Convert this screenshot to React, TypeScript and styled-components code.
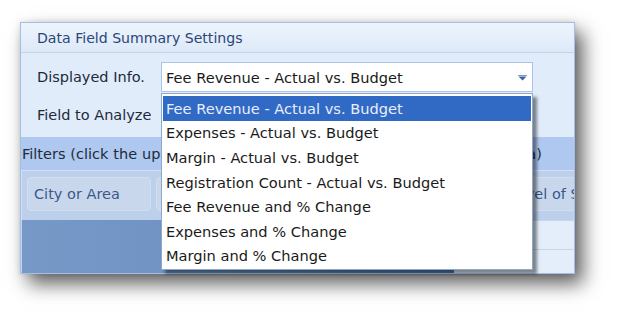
import React from "react";
import styled, { createGlobalStyle } from "styled-components";

const Global = createGlobalStyle`
  html, body { margin: 0; padding: 0; background: #ffffff; }
  body { width: 630px; height: 328px; overflow: hidden; font-family: "DejaVu Sans", Verdana, sans-serif; }
  *, *::before, *::after { box-sizing: border-box; }
`;

const Stage = styled.div`
  padding: 22px 0 0 20px;
`;

const Window = styled.div`
  position: relative;
  width: 555px;
  height: 252px;
  border: 1px solid #a3bfe8;
  box-shadow: 8px 10px 18px rgba(0, 0, 0, 0.62), 0 0 6px rgba(0, 0, 0, 0.12);
  background: #e1ecfb;
`;

const Clip = styled.div`
  display: flex;
  flex-direction: column;
  height: 100%;
  overflow: hidden;
  box-shadow: inset -3px 0 0 #bcd2f3;
`;

const Header = styled.div`
  height: 30px;
  flex: none;
  display: flex;
  align-items: center;
  padding-left: 16px;
  background: linear-gradient(#edf4fd, #dee9f8);
  border-bottom: 1px solid #c3d4ee;
  color: #2a4677;
  font-size: 14.1px;
`;

const Settings = styled.div`
  height: 84px;
  flex: none;
  display: grid;
  grid-template-columns: 124px 372px;
  grid-template-rows: 30px 30px;
  row-gap: 8px;
  align-content: start;
  padding: 9px 0 0 16px;
  background: #e1ecfb;
`;

const Label = styled.div`
  display: flex;
  align-items: center;
  font-size: 14.5px;
  color: #1d2a3a;
`;

const ComboWrap = styled.div`
  position: relative;
`;

const Combo = styled.div`
  height: 30px;
  border: 1px solid #abc5ea;
  background: #ffffff;
  display: flex;
  align-items: center;
  justify-content: space-between;
  padding: 0 5px 0 4px;
  font-size: 14.6px;
  color: #1a1a1a;
`;

const Arrow = styled.svg`
  width: 9px;
  height: 6px;
  margin-top: 1px;
`;

const List = styled.div`
  position: absolute;
  left: 0;
  top: 31px;
  width: 372px;
  height: 177px;
  background: #ffffff;
  border: 1px solid #8ea8cc;
  padding: 2px 1px;
  box-shadow: 4px 4px 3px rgba(0, 0, 0, 0.45);
  z-index: 5;
`;

const Item = styled.div<{ $active?: boolean }>`
  height: 24.6px;
  display: flex;
  align-items: center;
  padding-left: 3px;
  font-size: 14.6px;
  color: ${(p) => (p.$active ? "#e8eefb" : "#1a1a1a")};
  background: ${(p) => (p.$active ? "#316ac5" : "transparent")};
  white-space: nowrap;
`;

const FilterBar = styled.div`
  height: 33px;
  flex: none;
  display: flex;
  align-items: center;
  padding-left: 1px;
  background: #aec8f0;
  color: #1f2b3b;
  font-size: 14.5px;
  word-spacing: 0.3px;
  white-space: nowrap;
`;

const ButtonsArea = styled.div`
  height: 50px;
  flex: none;
  display: flex;
  gap: 5px;
  align-items: flex-start;
  padding: 6px 0 0 5px;
  background: #bdd0eb;
  border-top: 1px solid #d3e0f3;
  border-left: 1px solid #d3e0f3;
  white-space: nowrap;
`;

const FieldButton = styled.div<{ $w: number }>`
  flex: none;
  width: ${(p) => p.$w}px;
  height: 34px;
  display: flex;
  align-items: center;
  padding-left: 6px;
  border-radius: 4px;
  background: #c9d7ec;
  border: 1px solid #d2def0;
  color: #39598a;
  font-size: 14.5px;
`;

const Bottom = styled.div`
  flex: 1;
  display: flex;
  border-left: 1px solid #c3d4ee;
`;

const DarkPane = styled.div`
  flex: 1;
  background: linear-gradient(90deg, #7799c8, #6f92c3 40%, #4f78b2);
`;

const GridPane = styled.div`
  width: 120px;
  display: flex;
  flex-direction: column;
  background: #e4eefb;
`;

const GridRow = styled.div<{ $h: number }>`
  height: ${(p) => p.$h}px;
  flex: none;
  border-bottom: 1px solid #c5d5ec;
`;

const ListPos = styled.div`
  position: absolute;
  left: 140px;
  top: 39px;
`;

const items = [
  "Fee Revenue - Actual vs. Budget",
  "Expenses - Actual vs. Budget",
  "Margin - Actual vs. Budget",
  "Registration Count - Actual vs. Budget",
  "Fee Revenue and % Change",
  "Expenses and % Change",
  "Margin and % Change",
];

function DropList() {
  return (
    <ListPos>
      <List>
        {items.map((t, i) => (
          <Item key={t} $active={i === 0}>
            {t}
          </Item>
        ))}
      </List>
    </ListPos>
  );
}

export default function App() {
  return (
    <>
      <Global />
      <Stage>
        <Window>
          <Clip>
            <Header>Data Field Summary Settings</Header>
            <Settings>
              <Label>Displayed Info.</Label>
              <ComboWrap>
                <Combo>
                  <span>Fee Revenue - Actual vs. Budget</span>
                  <Arrow viewBox="0 0 9 6">
                    <rect x="0" y="0" width="9" height="1" fill="#7b9bcc" />
                    <path d="M0.5 1.5 H8.5 L4.5 5.5 Z" fill="#3b62a3" />
                  </Arrow>
                </Combo>
              </ComboWrap>
              <Label>Field to Analyze</Label>
            </Settings>
            <FilterBar>
              Filters (click the up arrow on a field to move it into the pivot data area)
            </FilterBar>
            <ButtonsArea>
              <FieldButton $w={124}>City or Area</FieldButton>
              <FieldButton $w={140}>Program Type</FieldButton>
              <FieldButton $w={196}>Term</FieldButton>
              <FieldButton $w={150}>Level of Study</FieldButton>
            </ButtonsArea>
            <Bottom>
              <DarkPane />
              <GridPane>
                <GridRow $h={0} />
                <GridRow $h={29} />
                <GridRow $h={24} />
              </GridPane>
            </Bottom>
          </Clip>
          <DropList />
        </Window>
      </Stage>
    </>
  );
}
